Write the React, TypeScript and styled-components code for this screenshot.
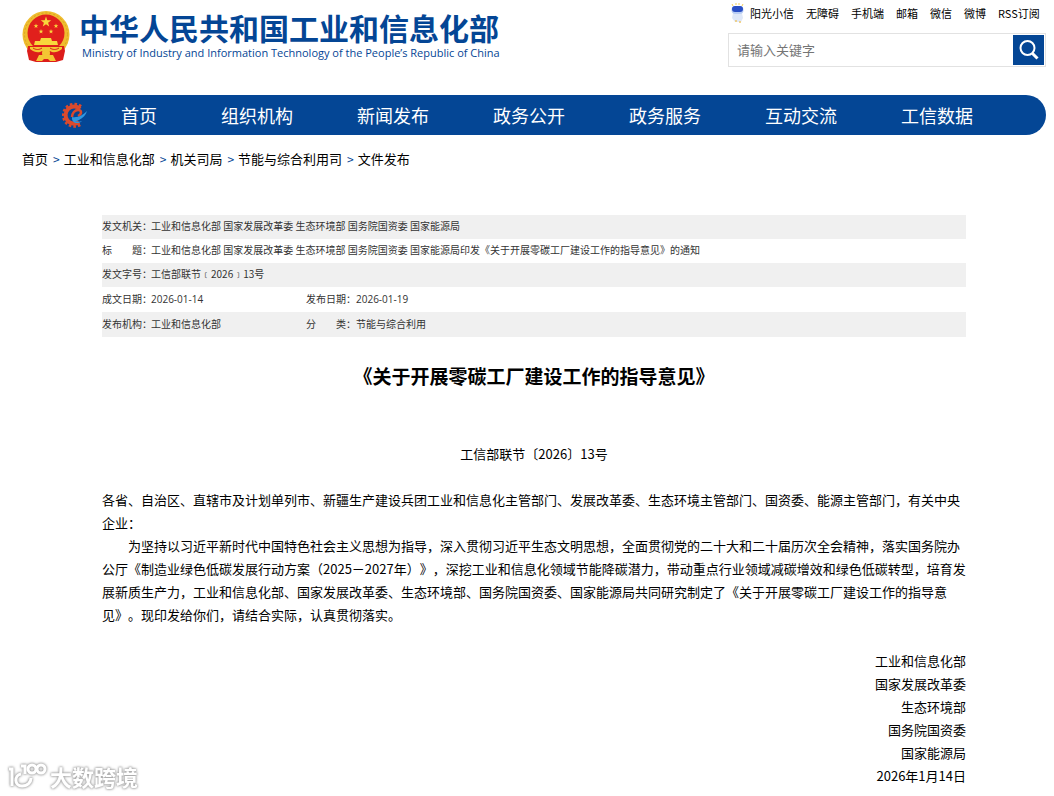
import React from 'react';
import styled, { createGlobalStyle } from 'styled-components';

const sans = '"Noto Sans CJK SC", sans-serif';
const blue = '#044695';

const GlobalStyle = createGlobalStyle`
  *, *::before, *::after { box-sizing: border-box; }
  body { margin: 0; background: #fff; color: #000; font-family: ${sans}; text-spacing-trim: space-all; }
  h1, h2, p, ul, ol { margin: 0; padding: 0; }
  ul, ol { list-style: none; }
  a { color: inherit; text-decoration: none; }
`;

const Page = styled.div`
  padding: 0 8px 8px 22px;
`;

const Header = styled.header`
  display: flex;
  justify-content: space-between;
  align-items: flex-start;
  height: 95px;
`;

const Brand = styled.a`
  display: flex;
  gap: 8px;
  padding-top: 10px;
  color: ${blue};
`;

const BrandText = styled.div`
  display: flex;
  flex-direction: column;
`;

const BrandName = styled.span`
  font-size: 30px;
  line-height: 34px;
  font-weight: 700;
  white-space: nowrap;
`;

const BrandEnglish = styled.span`
  padding-left: 3px;
  font: 500 11px/18px "Open Sans", sans-serif;
  white-space: nowrap;
`;

const Tools = styled.div`
  width: 318px;
  padding-top: 1px;
`;

const QuickLinks = styled.ul`
  display: flex;
  align-items: center;
  gap: 12px;
  height: 24px;
  padding-left: 3px;
  font-size: 11px;
  line-height: 24px;
  white-space: nowrap;
`;

const QuickLink = styled.a`
  display: flex;
  align-items: center;
  gap: 6px;
`;

const Search = styled.form`
  display: flex;
  height: 34px;
  margin-top: 8px;
  padding: 1px;
  border: 1px solid #e2e2e2;
`;

const SearchInput = styled.input`
  flex: 1;
  min-width: 0;
  padding: 0 7px;
  border: 0;
  outline: 0;
  font: 13px/20px ${sans};
  &::placeholder { color: #757575; opacity: 1; }
`;

const SearchButton = styled.button`
  display: flex;
  align-items: center;
  justify-content: center;
  width: 31px;
  padding: 0;
  border: 0;
  background: ${blue};
`;

const Nav = styled.nav`
  display: flex;
  align-items: center;
  height: 40px;
  padding-left: 40px;
  border-radius: 20px;
  background: ${blue};
  color: #fff;
`;

const NavList = styled.ul`
  display: flex;
  padding-left: 1px;
`;

const NavLink = styled.a`
  display: block;
  padding: 0 32px;
  font-size: 18px;
  line-height: 40px;
  white-space: nowrap;
`;

const Breadcrumb = styled.ol`
  display: flex;
  padding-top: 14px;
  font-size: 13px;
  line-height: 20px;
  white-space: nowrap;
`;

const Crumb = styled.li`
  & + &::before {
    content: '>';
    margin: 0 4px 0 5px;
    color: ${blue};
    font-size: 12px;
  }
`;

const Article = styled.main`
  padding: 46px 80px 0;
`;

const Meta = styled.table`
  width: 100%;
  border-collapse: collapse;
  table-layout: fixed;
  color: #333;
  font-size: 10px;
  line-height: 16px;
  text-align: left;
  white-space: nowrap;
`;

const MetaRow = styled.tr<{ $shaded?: boolean; $tall?: boolean }>`
  height: ${(p) => (p.$tall ? 25 : 24)}px;
  background: ${(p) => (p.$shaded ? '#f0f0f0' : 'transparent')};
`;

const MetaLabel = styled.th`
  padding: 0 0 2px;
  font-weight: 400;
`;

const Justified = styled.span`
  display: flex;
  justify-content: space-between;
  width: 50px;
`;

const MetaValue = styled.td`
  padding: 0 0 2px;
`;

const MetaDate = styled.time`
  font-family: "Open Sans", sans-serif;
`;

const Title = styled.h1`
  margin-top: 25px;
  font-size: 19px;
  line-height: 28px;
  text-align: center;
`;

const Body = styled.div`
  font-size: 13px;
  line-height: 23px;
`;

const DocNumber = styled.p`
  margin: 52px 0 23px;
  text-align: center;
`;

const Paragraph = styled.p<{ $indent?: boolean }>`
  text-indent: ${(p) => (p.$indent ? '2em' : '0')};
`;

const Signatures = styled.div`
  margin-top: 23px;
  text-align: right;
`;

const Watermark = styled.div`
  position: absolute;
  left: 7px;
  top: 760px;
  display: flex;
  align-items: center;
  gap: 3px;
  color: #fff;
  font-size: 22px;
  line-height: 32px;
  font-weight: 700;
  filter: drop-shadow(0 0 1px #aaa) drop-shadow(0 0 1px #aaa);
`;

const star = (cx: number, cy: number, r: number) =>
  Array.from({ length: 10 }, (_, i) => {
    const a = (Math.PI / 5) * i - Math.PI / 2;
    const d = i % 2 ? r * 0.4 : r;
    return `${(cx + d * Math.cos(a)).toFixed(2)},${(cy + d * Math.sin(a)).toFixed(2)}`;
  }).join(' ');

const Emblem = () => (
  <svg width="49" height="53" viewBox="0 0 49 53" aria-hidden="true">
    <circle cx="24" cy="24.500" r="23.500" fill="#efbd2e" />
    <circle cx="24" cy="24.500" r="21.500" fill="none" stroke="#d9a024" strokeDasharray="2 2" />
    <circle cx="24" cy="23" r="18.500" fill="#e1201c" />
    <g fill="#f8d73c">
      <polygon points={star(24, 12, 5.5)} />
      <polygon points={star(14, 16, 2.5)} />
      <polygon points={star(34, 16, 2.5)} />
      <polygon points={star(19, 21.5, 2.5)} />
      <polygon points={star(29, 21.5, 2.5)} />
      <path d="M19 28h10l1 3h-12zM13 31h22l1 4H12z" />
    </g>
    <path d="M6 36h36l1 5-2 9-7 2H14l-7-2-2-9z" fill="#dc1d1a" />
    <path d="M8 37h32v2c-5 4-9 4-12 2h-8c-3 2-7 2-12-2z" fill="#f4c633" />
    <path d="M11 38c3 2 6 2 9 0M37 38c-3 2-6 2-9 0" fill="none" stroke="#dc1d1a" />
    <path d="M14 51l3-6h14l3 6h-6l-2-2h-4l-2 2z" fill="#f4c633" />
    <circle cx="24" cy="43" r="4" fill="#f4c633" />
  </svg>
);

const Mascot = () => (
  <svg width="13" height="22" viewBox="0 0 13 22" aria-hidden="true">
    <path d="M2 4L1 2M5 3V1M8 3V1M11 4l1-2" stroke="#f3cf5a" />
    <path d="M2 11h9l1 5-2 4H4l-3-4z" fill="#dfe8f8" />
    <rect x="0.500" y="4" width="12" height="8" rx="4" fill="#b9cdf3" />
    <rect x="1" y="4" width="11" height="6" rx="3" fill="#2a4fc4" />
    <path d="M5 18v2M9 19v2" stroke="#f1c869" strokeWidth="1.500" />
  </svg>
);

const NavLogo = () => (
  <svg width="26" height="26" viewBox="0 0 26 26" aria-hidden="true" fill="none">
    <path d="M19 4.500A11 11 0 1 0 19 22" stroke="#dc4a2c" strokeWidth="3" strokeDasharray="2.500 2" />
    <path d="M18 7A8.500 8.500 0 1 0 17 20" stroke="#dc4a2c" strokeWidth="4" />
    <path d="M10 15c0-4 3-7 6-7 4 0 4 4 0 6" stroke="#dc4a2c" strokeWidth="2.500" />
    <path d="M10 15c6 1 11-2 15-6-1 4-4 7-8 9-2 1-3 1-4 1 2 1 5 1 7 0-4 4-11 2-10-4z" fill="#2f97e0" />
  </svg>
);

const quick = ['阳光小信', '无障碍', '手机端', '邮箱', '微信', '微博', 'RSS订阅'];
const sections = ['首页', '组织机构', '新闻发布', '政务公开', '政务服务', '互动交流', '工信数据'];
const crumbs = ['首页', '工业和信息化部', '机关司局', '节能与综合利用司', '文件发布'];
const signers = ['工业和信息化部', '国家发展改革委', '生态环境部', '国务院国资委', '国家能源局', '2026年1月14日'];

export default function App() {
  return (
    <>
      <GlobalStyle />
      <Page>
        <Header>
          <Brand href="#">
            <Emblem />
            <BrandText>
              <BrandName>中华人民共和国工业和信息化部</BrandName>
              <BrandEnglish>Ministry of Industry and Information Technology of the People’s Republic of China</BrandEnglish>
            </BrandText>
          </Brand>
          <Tools>
            <QuickLinks>
              {quick.map((q, i) => (
                <li key={q}>
                  <QuickLink href="#">
                    {i === 0 && <Mascot />}
                    {q}
                  </QuickLink>
                </li>
              ))}
            </QuickLinks>
            <Search onSubmit={(e) => e.preventDefault()}>
              <SearchInput aria-label="请输入关键字" placeholder="请输入关键字" />
              <SearchButton type="submit" aria-label="搜索">
                <svg width="22" height="22" viewBox="0 0 22 22" fill="none" stroke="#fff" strokeWidth="2">
                  <circle cx="9.500" cy="9" r="7" />
                  <path d="M14.500 14.500l5 5" strokeWidth="3" />
                </svg>
              </SearchButton>
            </Search>
          </Tools>
        </Header>
        <Nav>
          <NavLogo />
          <NavList>
            {sections.map((s) => (
              <li key={s}>
                <NavLink href="#">{s}</NavLink>
              </li>
            ))}
          </NavList>
        </Nav>
        <Breadcrumb>
          {crumbs.map((c) => (
            <Crumb key={c}>
              <a href="#">{c}</a>
            </Crumb>
          ))}
        </Breadcrumb>
        <Article>
          <Meta>
            <colgroup>
              <col width="49" />
              <col width="155" />
              <col width="50" />
              <col />
            </colgroup>
            <tbody>
              <MetaRow $shaded>
                <MetaLabel scope="row">发文机关：</MetaLabel>
                <MetaValue colSpan={3}>工业和信息化部 国家发展改革委 生态环境部 国务院国资委 国家能源局</MetaValue>
              </MetaRow>
              <MetaRow>
                <MetaLabel scope="row"><Justified><span>标</span><span>题：</span></Justified></MetaLabel>
                <MetaValue colSpan={3}>工业和信息化部 国家发展改革委 生态环境部 国务院国资委 国家能源局印发《关于开展零碳工厂建设工作的指导意见》的通知</MetaValue>
              </MetaRow>
              <MetaRow $shaded>
                <MetaLabel scope="row">发文字号：</MetaLabel>
                <MetaValue colSpan={3}>工信部联节﹝2026﹞13号</MetaValue>
              </MetaRow>
              <MetaRow $tall>
                <MetaLabel scope="row">成文日期：</MetaLabel>
                <MetaValue><MetaDate>2026-01-14</MetaDate></MetaValue>
                <MetaLabel scope="row">发布日期：</MetaLabel>
                <MetaValue><MetaDate>2026-01-19</MetaDate></MetaValue>
              </MetaRow>
              <MetaRow $shaded $tall>
                <MetaLabel scope="row">发布机构：</MetaLabel>
                <MetaValue>工业和信息化部</MetaValue>
                <MetaLabel scope="row"><Justified><span>分</span><span>类：</span></Justified></MetaLabel>
                <MetaValue>节能与综合利用</MetaValue>
              </MetaRow>
            </tbody>
          </Meta>
          <Title>《关于开展零碳工厂建设工作的指导意见》</Title>
          <Body>
            <DocNumber>工信部联节〔2026〕13号</DocNumber>
            <Paragraph>
              各省、自治区、直辖市及计划单列市、新疆生产建设兵团工业和信息化主管部门、发展改革委、生态环境主管部门、国资委、能源主管部门，有关中央企业：
            </Paragraph>
            <Paragraph $indent>
              为坚持以习近平新时代中国特色社会主义思想为指导，深入贯彻习近平生态文明思想，全面贯彻党的二十大和二十届历次全会精神，落实国务院办公厅《制造业绿色低碳发展行动方案（2025－2027年）》，深挖工业和信息化领域节能降碳潜力，带动重点行业领域减碳增效和绿色低碳转型，培育发展新质生产力，工业和信息化部、国家发展改革委、生态环境部、国务院国资委、国家能源局共同研究制定了《关于开展零碳工厂建设工作的指导意见》。现印发给你们，请结合实际，认真贯彻落实。
            </Paragraph>
            <Signatures>
              {signers.map((s) => (
                <p key={s}>{s}</p>
              ))}
            </Signatures>
          </Body>
        </Article>
      </Page>
      <Watermark>
        <svg width="40" height="30" viewBox="0 0 40 30" fill="none" stroke="#fff" strokeWidth="3" aria-hidden="true">
          <path d="M2 8h3v17M14 13c-7 1-7 12 1 12 6 0 9-4 9-8M14 5h4v8" />
          <circle cx="25" cy="8" r="4" />
          <circle cx="34" cy="8" r="4" />
        </svg>
        大数跨境
      </Watermark>
    </>
  );
}
